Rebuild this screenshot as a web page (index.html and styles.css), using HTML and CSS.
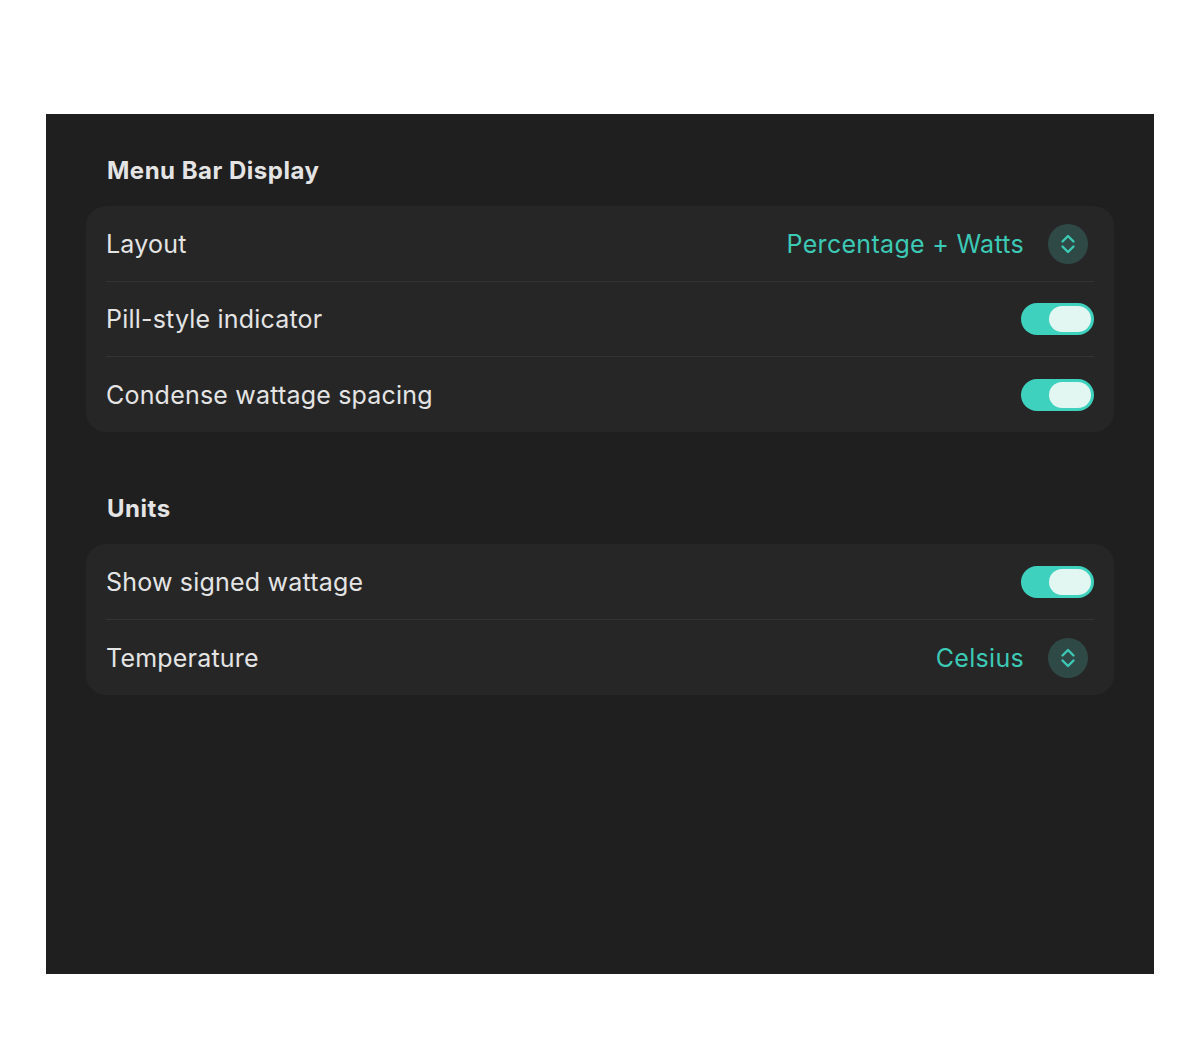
FILE: index.html
```html
<!DOCTYPE html>
<html lang="en">
<head>
  <meta charset="UTF-8" />
  <title>Settings</title>
  <link rel="stylesheet" href="styles.css">
</head>
<body>
  <div class="panel">
    <h2 class="section-title">Menu Bar Display</h2>
    <div class="card">
      <div class="row">
        <span class="label">Layout</span>
        <div class="picker">
          <span class="value">Percentage + Watts</span>
          <span class="stepper">
            <svg width="16" height="22" viewBox="0 0 16 22"><path d="M2.5 8.5 L8 3 L13.5 8.5 M2.5 13.5 L8 19 L13.5 13.5" fill="none" stroke="#3cc9b5" stroke-width="2.4" stroke-linecap="round" stroke-linejoin="round"/></svg>
          </span>
        </div>
      </div>
      <div class="row">
        <span class="label">Pill-style indicator</span>
        <span class="toggle on"><span class="knob"></span></span>
      </div>
      <div class="row">
        <span class="label">Condense wattage spacing</span>
        <span class="toggle on"><span class="knob"></span></span>
      </div>
    </div>

    <h2 class="section-title units">Units</h2>
    <div class="card">
      <div class="row">
        <span class="label">Show signed wattage</span>
        <span class="toggle on"><span class="knob"></span></span>
      </div>
      <div class="row">
        <span class="label">Temperature</span>
        <div class="picker">
          <span class="value">Celsius</span>
          <span class="stepper">
            <svg width="16" height="22" viewBox="0 0 16 22"><path d="M2.5 8.5 L8 3 L13.5 8.5 M2.5 13.5 L8 19 L13.5 13.5" fill="none" stroke="#3cc9b5" stroke-width="2.4" stroke-linecap="round" stroke-linejoin="round"/></svg>
          </span>
        </div>
      </div>
    </div>
  </div>
</body>
</html>
```

FILE: styles.css
```css
body { margin: 0; padding: 0; background: #ffffff; font-family: Inter, "Noto Sans", sans-serif; }
.panel {
  margin: 114px 0 0 46px; width: 1108px; height: 860px; box-sizing: border-box;
  background: #1f1f1f; padding: 43px 40px 0;
}
.section-title {
  margin: 0 0 21px; padding-left: 21px; font-size: 24px; line-height: 28px;
  font-weight: 700; letter-spacing: 0.5px; color: #e4e4e4;
}
.section-title.units { margin-top: 63px; }
.card { background: #262626; border-radius: 20px; padding: 0 20px; }
.row {
  display: flex; align-items: center; justify-content: space-between;
  height: 75px; box-sizing: border-box; border-bottom: 1px solid #333333;
}
.row:first-child { height: 76px; }
.row:last-child { border-bottom: none; }
.label { font-size: 25px; letter-spacing: 0.2px; color: #e4e4e4; }
.picker { display: flex; align-items: center; gap: 24px; margin-right: 6px; }
.value { font-size: 25px; letter-spacing: 0.3px; color: #3cc9b5; }
.stepper {
  width: 40px; height: 40px; border-radius: 50%; background: #2f4a46;
  display: flex; align-items: center; justify-content: center;
}
.toggle {
  width: 73px; height: 32px; border-radius: 16px; background: #3dd1be;
  position: relative; box-sizing: border-box;
}
.toggle .knob {
  position: absolute; right: 3px; top: 3px; width: 42px; height: 26px;
  border-radius: 13px; background: #e2f6f2;
}
```
